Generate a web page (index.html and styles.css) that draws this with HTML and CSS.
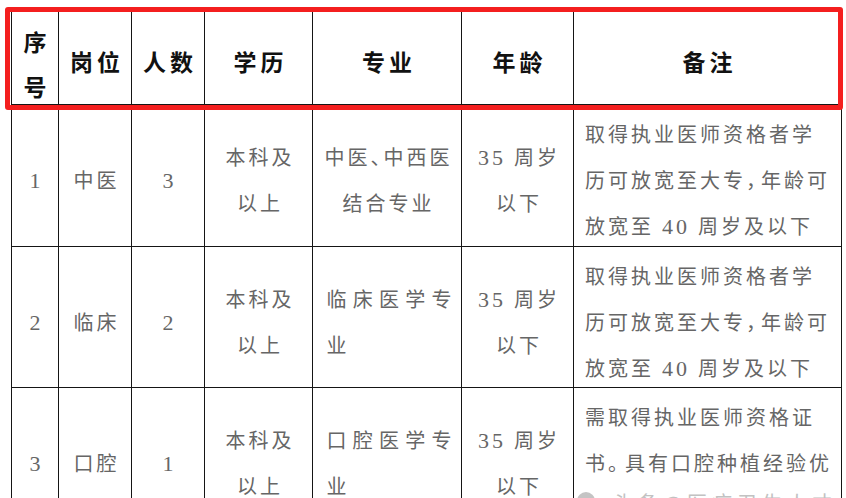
FILE: index.html
```html
<!DOCTYPE html>
<html lang="zh-CN">
<head>
<meta charset="utf-8">
<title>招聘岗位表</title>
<link rel="stylesheet" href="styles.css">
</head>
<body>
<div class="sheet">
  <div class="cell head stack"><div class="t">序<br>号</div></div>
  <div class="cell head"><div class="t">岗位</div></div>
  <div class="cell head"><div class="t">人数</div></div>
  <div class="cell head"><div class="t">学历</div></div>
  <div class="cell head"><div class="t">专业</div></div>
  <div class="cell head"><div class="t">年龄</div></div>
  <div class="cell head"><div class="t">备注</div></div>

  <div class="cell body"><div class="t"><span class="n">1</span></div></div>
  <div class="cell body"><div class="t">中医</div></div>
  <div class="cell body"><div class="t"><span class="n">3</span></div></div>
  <div class="cell body"><div class="t">本科及<br>以上</div></div>
  <div class="cell body"><div class="t">中医<span class="dun">、</span>中西医<br>结合专业</div></div>
  <div class="cell body"><div class="t"><span class="n">35</span> 周岁<br>以下</div></div>
  <div class="cell body note"><div class="t">取得执业医师资格者学<br>历可放宽至大专<span class="pc">，</span>年龄可<br>放宽至 <span class="n">40</span> 周岁及以下</div></div>

  <div class="cell body"><div class="t"><span class="n">2</span></div></div>
  <div class="cell body"><div class="t">临床</div></div>
  <div class="cell body"><div class="t"><span class="n">2</span></div></div>
  <div class="cell body"><div class="t">本科及<br>以上</div></div>
  <div class="cell body"><div class="t jblock"><div class="jl">临床医学专</div><div>业</div></div></div>
  <div class="cell body"><div class="t"><span class="n">35</span> 周岁<br>以下</div></div>
  <div class="cell body note"><div class="t">取得执业医师资格者学<br>历可放宽至大专<span class="pc">，</span>年龄可<br>放宽至 <span class="n">40</span> 周岁及以下</div></div>

  <div class="cell body"><div class="t"><span class="n">3</span></div></div>
  <div class="cell body"><div class="t">口腔</div></div>
  <div class="cell body"><div class="t"><span class="n">1</span></div></div>
  <div class="cell body"><div class="t">本科及<br>以上</div></div>
  <div class="cell body"><div class="t jblock"><div class="jl">口腔医学专</div><div>业</div></div></div>
  <div class="cell body"><div class="t"><span class="n">35</span> 周岁<br>以下</div></div>
  <div class="cell body note"><div class="t">需取得执业医师资格证<br>书<span class="pd">。</span>具有口腔种植经验优<br>先</div></div>
</div>
<div class="highlight"></div>
<div class="watermark"><span class="wm-dot"></span><span class="wm-text">头条@医疗卫生人才</span></div>
</body>
</html>
```
FILE: styles.css
```css
html, body {
  margin: 0;
  padding: 0;
  background: #fff;
}
body {
  width: 846px;
  height: 498px;
  overflow: hidden;
  position: relative;
}
.sheet {
  display: grid;
  grid-template-columns: 47px 73px 73px 108px 149px 112px 268px;
  grid-template-rows: 94px 142px 141px 142px;
  width: max-content;
  margin: 10px 0 0 11px;
  border-left: 1px solid #151515;
  border-top: 1px solid #151515;
}
.cell {
  box-sizing: border-box;
  border-right: 1px solid #151515;
  border-bottom: 1px solid #151515;
  display: flex;
  flex-direction: column;
  align-items: center;
  justify-content: center;
  text-align: center;
  white-space: nowrap;
}
.head {
  font-family: "Noto Sans CJK SC", sans-serif;
  font-weight: 700;
  font-size: 23px;
  letter-spacing: 4px;
  padding-left: 4px;
  padding-top: 7px;
  line-height: 30px;
  color: #111;
}
.head.stack {
  line-height: 45px;
  padding-top: 12px;
  letter-spacing: 0;
  padding-left: 0;
}
.body {
  font-family: "Liberation Serif", "Noto Sans CJK SC", serif;
  font-size: 20px;
  letter-spacing: 3px;
  padding-left: 3px;
  padding-top: 11px;
  line-height: 46px;
  color: #666;
}
.n {
  font-size: 22px;
}
.dun {
  letter-spacing: -7px;
}
.pc {
  letter-spacing: -5px;
}
.pd {
  letter-spacing: -3px;
}
.jblock {
  width: 128px;
  margin-left: 4px;
  text-align: left;
}
.jl {
  text-align: justify;
  text-align-last: justify;
}
.note {
  align-items: flex-start;
  text-align: left;
  padding-left: 11px;
}
.highlight {
  position: absolute;
  left: 5px;
  top: 7px;
  width: 838px;
  height: 103px;
  box-sizing: border-box;
  border: 5px solid #f41f1f;
  border-radius: 3px;
}
.watermark {
  position: absolute;
  left: 577px;
  top: 492px;
  display: flex;
  align-items: flex-start;
  gap: 18px;
}
.wm-dot {
  width: 18px;
  height: 18px;
  border-radius: 50%;
  background: #c4c4c4;
}
.wm-text {
  font-family: "Noto Sans CJK SC", sans-serif;
  font-size: 20px;
  line-height: 20px;
  letter-spacing: 5px;
  color: #c2c2c2;
  margin-top: 1px;
}
```
